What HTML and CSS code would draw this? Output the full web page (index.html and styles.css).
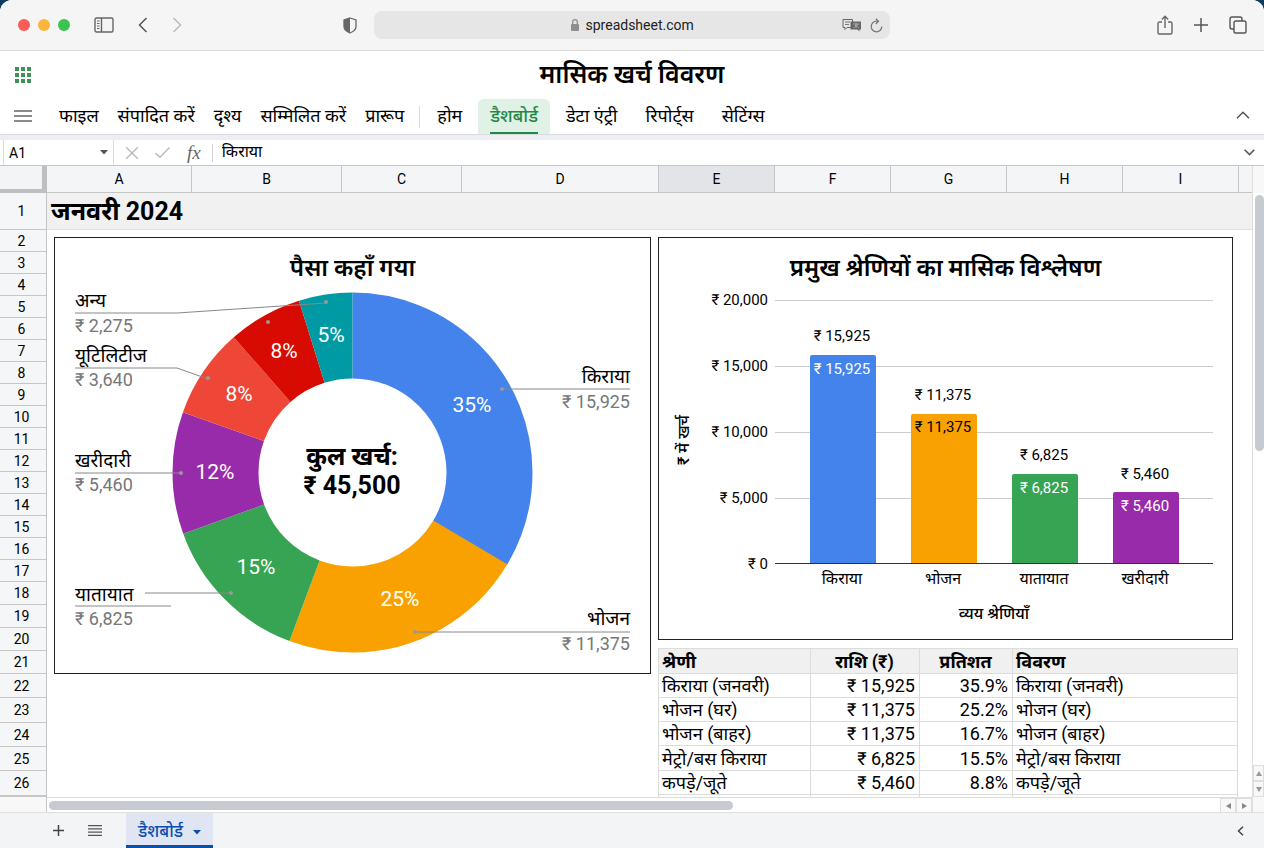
FILE: index.html
```html
<!DOCTYPE html>
<html lang="hi">
<head>
  <meta charset="UTF-8">
  <meta name="viewport" content="width=device-width, initial-scale=1.0">
  <title>मासिक खर्च विवरण</title>
  <link rel="stylesheet" href="styles.css">
</head>
<body>
  <div class="window">
    <header class="browser-bar">
      <div class="bar-left">
        <span class="light red"></span>
        <span class="light yellow"></span>
        <span class="light green"></span>
        <button class="icon-btn sidebar-btn" aria-label="Sidebar">
          <svg width="20" height="16" viewBox="0 0 20 16" fill="none" stroke="#666" stroke-width="1.4"><rect x="1" y="1" width="18" height="14" rx="1.5"/><path d="M7.5 1v14"/><path d="M3 4h2.500M3 6.500h2.500M3 9h2.500M3 11.500h2.500" stroke-width="1"/></svg>
        </button>
        <button class="icon-btn back-btn" aria-label="Back">
          <svg width="10" height="16" viewBox="0 0 10 16" fill="none" stroke="#555" stroke-width="1.5"><path d="M8.500 1L1.500 8l7 7"/></svg>
        </button>
        <button class="icon-btn" aria-label="Forward">
          <svg width="10" height="16" viewBox="0 0 10 16" fill="none" stroke="#bbb" stroke-width="1.5"><path d="M1.500 1l7 7-7 7"/></svg>
        </button>
        <button class="icon-btn shield-btn" aria-label="Privacy">
          <svg width="14" height="17" viewBox="0 0 14 17"><path d="M7 1l6 2v6.500c0 3-2.500 5-6 6.500-3.500-1.500-6-3.500-6-6.500V3z" fill="#f5f5f5" stroke="#666" stroke-width="1.3"/><path d="M7 1v15c-3.500-1.500-6-3.500-6-6.500V3z" fill="#666"/></svg>
        </button>
      </div>
      <div class="address">
        <div class="address-main">
          <svg width="10" height="14" viewBox="0 0 10 14"><rect x="1" y="6" width="8" height="7" rx="1" fill="#8e8e8e"/><path d="M2.700 6V4a2.300 2.300 0 0 1 4.600 0v2" fill="none" stroke="#8e8e8e" stroke-width="1.300"/></svg>
          <input type="text" class="url" value="spreadsheet.com" aria-label="Address">
        </div>
        <div class="address-tools">
          <button class="icon-btn" aria-label="Translate">
            <svg width="20" height="14" viewBox="0 0 20 14"><path d="M1 1.500h9.500v8H5L3 11.500v-2H1z" fill="#e6e6e6" stroke="#666" stroke-width="1"/><path d="M3 4h5M3 6.500h4" stroke="#777" stroke-width="1"/><path d="M8.500 3.500H19v8h-1.500v2l-2-2h-7z" fill="#666"/><path d="M11 6h6.500M14 4.500v5.500M11.500 10l5-4M17 10l-4-3" stroke="#bbb" stroke-width=".7"/></svg>
          </button>
          <button class="icon-btn" aria-label="Reload">
            <svg width="13" height="15" viewBox="0 0 13 15" fill="none" stroke="#777" stroke-width="1.200"><path d="M11.800 8.500a5.300 5.300 0 1 1-5.300-5.300h1.500M5.800.6l2.700 2.600-2.700 2.800"/></svg>
          </button>
        </div>
      </div>
      <div class="bar-right">
        <button class="icon-btn" aria-label="Share">
          <svg width="16" height="20" viewBox="0 0 16 20" fill="none" stroke="#666" stroke-width="1.400"><path d="M5 7H2.500C1.700 7 1 7.700 1 8.500v9c0 .8.700 1.500 1.500 1.500h11c.8 0 1.500-.7 1.500-1.500v-9c0-.8-.7-1.500-1.500-1.500H11M8 13V1.500M4.800 4.500L8 1.300l3.200 3.200"/></svg>
        </button>
        <button class="icon-btn" aria-label="New tab">
          <svg width="14" height="14" viewBox="0 0 14 14" stroke="#555" stroke-width="1.500"><path d="M7 0v14M0 7h14"/></svg>
        </button>
        <button class="icon-btn" aria-label="Tabs">
          <svg width="18" height="18" viewBox="0 0 18 18" fill="none" stroke="#555" stroke-width="1.400"><rect x="5" y="5" width="12" height="12" rx="1.800"/><path d="M5 13H3c-1.100 0-2-.9-2-2V3c0-1.100.9-2 2-2h8c1.100 0 2 .9 2 2v2"/></svg>
        </button>
      </div>
    </header>

    <div class="title-row">
      <button class="icon-btn" aria-label="Apps">
        <svg width="16" height="16" viewBox="0 0 16 16" fill="#3d9257"><path d="M0 0h4v4H0zM6 0h4v4H6zM12 0h4v4h-4zM0 6h4v4H0zM6 6h4v4H6zM12 6h4v4h-4zM0 12h4v4H0zM6 12h4v4H6zM12 12h4v4h-4z"/></svg>
      </button>
      <h1>मासिक खर्च विवरण</h1>
    </div>

    <nav class="menu">
      <button class="icon-btn burger" aria-label="Menu">
        <svg width="18" height="12" viewBox="0 0 18 12" stroke="#666" stroke-width="1.500"><path d="M0 1h18M0 6h18M0 11h18"/></svg>
      </button>
      <div class="menu-items">
        <button>फाइल</button>
        <button>संपादित करें</button>
        <button>दृश्य</button>
        <button>सम्मिलित करें</button>
        <button>प्रारूप</button>
      </div>
      <div class="tabs">
        <a href="#">होम</a>
        <a href="#" class="active">डैशबोर्ड</a>
        <a href="#">डेटा एंट्री</a>
        <a href="#">रिपोर्ट्स</a>
        <a href="#">सेटिंग्स</a>
      </div>
      <button class="icon-btn collapse" aria-label="Collapse">
        <svg width="14" height="8" viewBox="0 0 14 8" fill="none" stroke="#555" stroke-width="1.500"><path d="M1 7.300l6-6 6 6"/></svg>
      </button>
    </nav>

    <div class="formula-bar">
      <div class="name-box">
        <input type="text" value="A1" aria-label="Cell">
        <button class="icon-btn" aria-label="Named ranges">
          <svg width="8" height="5" viewBox="0 0 8 5"><path d="M0 0h8L4 4.500z" fill="#555"/></svg>
        </button>
      </div>
      <div class="formula-tools">
        <button class="icon-btn" aria-label="Cancel">
          <svg width="12" height="12" viewBox="0 0 12 12" stroke="#b8b8b8" stroke-width="1.300"><path d="M0 0l12 12M12 0L0 12"/></svg>
        </button>
        <button class="icon-btn" aria-label="Accept">
          <svg width="15" height="11" viewBox="0 0 15 11" fill="none" stroke="#b8b8b8" stroke-width="1.300"><path d="M.5 6l4.500 4.300L14.500.5"/></svg>
        </button>
        <button class="icon-btn fx" aria-label="Function">fx</button>
      </div>
      <input type="text" class="formula" value="किराया" aria-label="Formula">
      <button class="icon-btn" aria-label="Expand">
        <svg width="11" height="7" viewBox="0 0 11 7" fill="none" stroke="#555" stroke-width="1.500"><path d="M.7.8l4.800 4.800L10.300.8"/></svg>
      </button>
    </div>

    <main class="sheet">
      <div class="corner"></div>
      <div class="col-heads">
        <span>A</span><span>B</span><span>C</span><span>D</span><span class="selected">E</span><span>F</span><span>G</span><span>H</span><span>I</span><span></span>
      </div>
      <div class="head-end"></div>

      <div class="row-heads">
        <span>1</span><span>2</span><span>3</span><span>4</span><span>5</span><span>6</span><span>7</span><span>8</span><span>9</span><span>10</span><span>11</span><span>12</span><span>13</span><span>14</span><span>15</span><span>16</span><span>17</span><span>18</span><span>19</span><span>20</span><span>21</span><span>22</span><span>23</span><span>24</span><span>25</span><span>26</span><span></span>
      </div>

      <div class="cells">
        <h2 class="month">जनवरी 2024</h2>
        <div class="dashboard">
          <section class="panel">
            <h3>पैसा कहाँ गया</h3>
            <svg class="donut" viewBox="0 0 595 383">
              <g class="slices" transform="rotate(-90 297.500 182.500)">
                <circle cx="297.500" cy="182.500" r="137" pathLength="360" stroke="#4483ec" stroke-dasharray="121 239"/>
                <circle cx="297.500" cy="182.500" r="137" pathLength="360" stroke="#f8a100" stroke-dasharray="79.800 280.200" stroke-dashoffset="-120.700"/>
                <circle cx="297.500" cy="182.500" r="137" pathLength="360" stroke="#36a452" stroke-dasharray="49.600 310.400" stroke-dashoffset="-200.500"/>
                <circle cx="297.500" cy="182.500" r="137" pathLength="360" stroke="#982ba9" stroke-dasharray="39.500 320.500" stroke-dashoffset="-250.100"/>
                <circle cx="297.500" cy="182.500" r="137" pathLength="360" stroke="#ee4737" stroke-dasharray="29.100 330.900" stroke-dashoffset="-289.600"/>
                <circle cx="297.500" cy="182.500" r="137" pathLength="360" stroke="#d80b02" stroke-dasharray="24 336" stroke-dashoffset="-318.700"/>
                <circle cx="297.500" cy="182.500" r="137" pathLength="360" stroke="#009aa4" stroke-dasharray="17.300 342.700" stroke-dashoffset="-342.700"/>
              </g>
              <g class="leaders">
                <path d="M20 23h102l149-10"/><circle cx="271" cy="12" r="2"/>
                <circle cx="213" cy="32" r="2"/>
                <path d="M20 78h102l31 11"/><circle cx="153" cy="88" r="2"/>
                <path d="M20 183h105"/><circle cx="126" cy="183" r="2"/>
                <path d="M90 303h85M20 316h96"/><circle cx="176" cy="303" r="2"/>
                <path d="M447 99h128"/><circle cx="447" cy="99" r="2"/>
                <path d="M360 342h215"/><circle cx="360" cy="342" r="2"/>
              </g>
              <g class="percent">
                <text x="417" y="122">35%</text>
                <text x="345" y="316">25%</text>
                <text x="201" y="284">15%</text>
                <text x="160" y="189">12%</text>
                <text x="184" y="111">8%</text>
                <text x="229" y="68">8%</text>
                <text x="276" y="52">5%</text>
              </g>
              <g class="total">
                <text x="297" y="175">कुल खर्च:</text>
                <text x="297" y="204">₹ 45,500</text>
              </g>
              <g class="name">
                <text x="20" y="17">अन्य</text>
                <text x="20" y="72">यूटिलिटीज</text>
                <text x="20" y="177">खरीदारी</text>
                <text x="20" y="311">यातायात</text>
                <text class="end" x="575" y="93">किराया</text>
                <text class="end" x="575" y="335">भोजन</text>
              </g>
              <g class="amount">
                <text x="20" y="42">₹ 2,275</text>
                <text x="20" y="96">₹ 3,640</text>
                <text x="20" y="201">₹ 5,460</text>
                <text x="20" y="335">₹ 6,825</text>
                <text class="end" x="575" y="118">₹ 15,925</text>
                <text class="end" x="575" y="360">₹ 11,375</text>
              </g>
            </svg>
          </section>

          <div class="right-side">
            <section class="panel">
              <h3>प्रमुख श्रेणियों का मासिक विश्लेषण</h3>
              <svg class="bars" viewBox="0 0 573 349">
                <path class="grid" d="M116 10.500h438M116 76.500h438M116 142.500h438M116 208.500h438"/>
                <path fill="#4483ec" d="M151 274V67q0-2 2-2h62q2 0 2 2v207z"/>
                <path fill="#f8a100" d="M252 274V126q0-2 2-2h62q2 0 2 2v148z"/>
                <path fill="#36a452" d="M353 274V186q0-2 2-2h62q2 0 2 2v88z"/>
                <path fill="#982ba9" d="M454 274V204q0-2 2-2h62q2 0 2 2v70z"/>
                <path class="axis" d="M116 273.500h438"/>
                <g class="scale">
                  <text x="109" y="15">₹ 20,000</text>
                  <text x="109" y="81">₹ 15,000</text>
                  <text x="109" y="147">₹ 10,000</text>
                  <text x="109" y="213">₹ 5,000</text>
                  <text x="109" y="279">₹ 0</text>
                </g>
                <g class="value">
                  <text x="183" y="51">₹ 15,925</text>
                  <text x="284" y="110">₹ 11,375</text>
                  <text x="385" y="170">₹ 6,825</text>
                  <text x="486" y="189">₹ 5,460</text>
                  <text x="183" y="84" class="light-text">₹ 15,925</text>
                  <text x="284" y="142">₹ 11,375</text>
                  <text x="385" y="203" class="light-text">₹ 6,825</text>
                  <text x="486" y="221" class="light-text">₹ 5,460</text>
                </g>
                <g class="value category">
                  <text x="183" y="294">किराया</text>
                  <text x="284" y="294">भोजन</text>
                  <text x="385" y="294">यातायात</text>
                  <text x="486" y="294">खरीदारी</text>
                </g>
                <text class="axis-title" x="335" y="329">व्यय श्रेणियाँ</text>
                <text class="axis-title" transform="translate(30 150) rotate(-90)">₹ में खर्च</text>
              </svg>
            </section>

            <table>
              <thead>
                <tr><th class="cat">श्रेणी</th><th class="amt">राशि (₹)</th><th class="pct">प्रतिशत</th><th>विवरण</th></tr>
              </thead>
              <tbody>
                <tr><td>किराया (जनवरी)</td><td class="num">₹ 15,925</td><td class="num">35.9%</td><td>किराया (जनवरी)</td></tr>
                <tr><td>भोजन (घर)</td><td class="num">₹ 11,375</td><td class="num">25.2%</td><td>भोजन (घर)</td></tr>
                <tr><td>भोजन (बाहर)</td><td class="num">₹ 11,375</td><td class="num">16.7%</td><td>भोजन (बाहर)</td></tr>
                <tr><td>मेट्रो/बस किराया</td><td class="num">₹ 6,825</td><td class="num">15.5%</td><td>मेट्रो/बस किराया</td></tr>
                <tr><td>कपड़े/जूते</td><td class="num">₹ 5,460</td><td class="num">8.8%</td><td>कपड़े/जूते</td></tr>
                <tr><td></td><td></td><td></td><td></td></tr>
              </tbody>
            </table>
          </div>
        </div>
      </div>

      <div class="scroll-y">
        <div class="thumb-y"></div>
        <button class="arrow" aria-label="Scroll up"><svg width="6" height="5" viewBox="0 0 6 5"><path d="M0 5h6L3 0z" fill="#999"/></svg></button>
        <button class="arrow" aria-label="Scroll down"><svg width="6" height="5" viewBox="0 0 6 5"><path d="M0 0h6L3 5z" fill="#999"/></svg></button>
      </div>

      <div class="foot-corner"></div>
      <div class="scroll-x">
        <div class="track-x"><div class="thumb-x"></div></div>
        <button class="arrow" aria-label="Scroll left"><svg width="5" height="6" viewBox="0 0 5 6"><path d="M5 0v6L0 3z" fill="#888"/></svg></button>
        <button class="arrow" aria-label="Scroll right"><svg width="5" height="6" viewBox="0 0 5 6"><path d="M0 0v6l5-3z" fill="#888"/></svg></button>
      </div>
      <div class="foot-end"></div>
    </main>

    <footer class="sheet-tabs">
      <button class="icon-btn" aria-label="Add sheet">
        <svg width="11" height="11" viewBox="0 0 11 11" stroke="#444" stroke-width="1.500"><path d="M5.500 0v11M0 5.500h11"/></svg>
      </button>
      <button class="icon-btn" aria-label="All sheets">
        <svg width="14" height="11" viewBox="0 0 14 11" stroke="#555" stroke-width="1.300"><path d="M0 .7h14M0 3.900h14M0 7.100h14M0 10.300h14"/></svg>
      </button>
      <button class="sheet-tab">
        <span>डैशबोर्ड</span>
        <svg width="8" height="5" viewBox="0 0 8 5"><path d="M0 0h8L4 4.500z" fill="#0b4fae"/></svg>
      </button>
      <button class="icon-btn explore" aria-label="Side panel">
        <svg width="7" height="10" viewBox="0 0 7 10" fill="none" stroke="#444" stroke-width="1.500"><path d="M6 .7L1.500 5 6 9.300"/></svg>
      </button>
    </footer>
  </div>
</body>
</html>
```
FILE: styles.css
```css
* {
  box-sizing: border-box;
}

body {
  margin: 0;
  background-color: #0c3a5c;
  font-family: Roboto, "Noto Sans Devanagari", "Noto Sans", sans-serif;
  color: #000;
}

button,
input {
  font-family: inherit;
  border: none;
  background: none;
  padding: 0;
  margin: 0;
  color: inherit;
}

button {
  cursor: pointer;
}

.icon-btn {
  display: flex;
  align-items: center;
  justify-content: center;
  flex-shrink: 0;
}

.window {
  display: flex;
  flex-direction: column;
  height: 100vh;
  overflow: hidden;
  background-color: #fff;
  border-radius: 12px 12px 0 0;
}

/* browser bar */
.browser-bar {
  display: grid;
  grid-template-columns: 374fr 516fr 374fr;
  align-items: center;
  flex-shrink: 0;
  height: 51px;
  background-color: #f5f5f5;
  border-bottom: 1px solid #dcdcdc;
}

.bar-left {
  display: flex;
  align-items: center;
  gap: 8px;
  padding: 0 17px 0 18px;
}

.light {
  width: 12px;
  height: 12px;
  border-radius: 50%;
}

.red {
  background-color: #fb5b56;
}

.yellow {
  background-color: #fbb53d;
}

.green {
  background-color: #3dc254;
}

.sidebar-btn {
  margin-left: 16px;
}

.back-btn {
  margin: 0 16px;
}

.shield-btn {
  margin-left: auto;
}

.address {
  display: grid;
  grid-template-columns: 1fr auto 1fr;
  align-items: center;
  height: 28px;
  padding-right: 7px;
  background-color: #e6e6e6;
  border-radius: 8px;
}

.address-main {
  grid-column: 2;
  display: flex;
  align-items: center;
  gap: 6px;
  margin-left: 8px;
}

.url {
  width: 110px;
  font-size: 14px;
  color: #222;
}

.address-tools {
  display: flex;
  align-items: center;
  justify-content: flex-end;
  gap: 8px;
}

.bar-right {
  display: flex;
  align-items: center;
  justify-content: flex-end;
  gap: 21px;
  padding-right: 17px;
}

/* title and menu */
.title-row {
  display: grid;
  grid-template-columns: 32px 1fr 32px;
  align-items: center;
  flex-shrink: 0;
  height: 48px;
  padding: 0 7px;
}

h1 {
  margin: 0;
  font-size: 25px;
  font-weight: 600;
  line-height: 48px;
  text-align: center;
}

.menu {
  display: flex;
  align-items: center;
  flex-shrink: 0;
  height: 36px;
  padding: 0 14px;
  border-bottom: 1px solid #dadce0;
  font-size: 18px;
}

.burger {
  padding-bottom: 2px;
}

.menu-items {
  display: flex;
  gap: 19px;
  margin-left: 27px;
  padding-right: 15px;
  border-right: 1px solid #dadada;
}

.menu-items button {
  font-size: 18px;
  line-height: 20px;
  padding-bottom: 2px;
}

.tabs {
  display: flex;
  gap: 4px;
  margin-left: 5px;
  height: 35px;
}

.tabs a {
  padding: 0 12px;
  line-height: 33px;
  color: #000;
  text-decoration: none;
}

.tabs .active {
  display: flex;
  flex-direction: column;
  color: #1f8a48;
  background-color: #e0f1e5;
  border-radius: 6px 6px 0 0;
  font-weight: 500;
}

.tabs .active::after {
  content: "";
  height: 2px;
  background-color: #1f8a48;
}

.collapse {
  margin-left: auto;
  padding-bottom: 3px;
}

/* formula bar */
.formula-bar {
  display: flex;
  align-items: center;
  flex-shrink: 0;
  height: 31px;
  padding: 0 9px 0 3px;
  border-top: 5px solid #eceef1;
  border-bottom: 1px solid #c6c6c6;
  font-size: 14px;
}

.name-box {
  display: flex;
  align-items: center;
  width: 111px;
  height: 25px;
  padding: 0 5px;
  border: 1px solid #dadce0;
  border-width: 0 1px;
}

.name-box input {
  flex: 1;
  min-width: 0;
  font-size: 14px;
}

.formula-tools {
  display: flex;
  align-items: center;
  gap: 17px;
  padding: 0 11px 0 12px;
  border-right: 1px solid #d5d5d5;
}

.fx {
  font-family: "Liberation Serif", serif;
  font-style: italic;
  font-size: 19px;
  line-height: 18px;
  color: #666;
}

.formula {
  flex: 1;
  padding-left: 9px;
  font-size: 16px;
  height: 24px;
}

/* sheet */
.sheet {
  flex: 1;
  min-height: 0;
  display: grid;
  grid-template-columns: 47px 1fr 12px;
  grid-template-rows: 27px minmax(0, 1fr) 15px;
}

.corner {
  background-color: #f3f4f6;
  border-right: 5px solid #bebfc1;
  border-bottom: 4px solid #bebfc1;
}

.col-heads {
  display: grid;
  grid-template-columns: 145fr 150fr 120fr 197fr 116fr 116fr 116fr 116fr 116fr 13fr;
  background-color: #f4f5f7;
  border-bottom: 1px solid #c6c6c6;
  font-size: 14px;
  line-height: 26px;
  text-align: center;
}

.col-heads span {
  border-right: 1px solid #c6c6c6;
}

.col-heads span:last-child {
  border-right: none;
}

.col-heads .selected {
  background-color: #e3e4e8;
}

.head-end,
.foot-end {
  background-color: #f8f8f8;
  border-left: 1px solid #dedede;
}

.row-heads {
  display: grid;
  grid-template-rows: 37px repeat(16, 22px) repeat(4, 23px) 24px 25px 24px 24px 25px;
  overflow: hidden;
  background-color: #f5f6f8;
  border-right: 1px solid #c6c6c6;
  font-size: 14px;
}

.row-heads span {
  display: flex;
  align-items: center;
  justify-content: center;
  padding-right: 3px;
  border-bottom: 1px solid #c6c6c6;
}

.cells {
  overflow: hidden;
}

.month {
  height: 37px;
  margin: 0;
  padding-left: 4px;
  background-color: #f1f1f1;
  border-bottom: 1px solid #e0e0e0;
  font-size: 25px;
  font-weight: 700;
  line-height: 37px;
}

.dashboard {
  display: grid;
  grid-template-columns: 597fr 580fr;
  align-items: start;
  gap: 7px;
  padding: 7px 14px 0 7px;
}

.panel {
  border: 1px solid #222;
}

.panel svg {
  display: block;
  width: 100%;
  height: auto;
  overflow: visible;
}

h3 {
  margin: 0;
  height: 52px;
  padding-top: 8px;
  font-size: 24px;
  font-weight: 600;
  line-height: 44px;
  text-align: center;
}

.right-side .panel {
  margin-right: 5px;
}

.slices circle {
  fill: none;
  stroke-width: 86px;
}

.leaders path {
  fill: none;
  stroke: #888;
}

.leaders circle {
  fill: #999;
}

.percent text {
  font-size: 21px;
  fill: #fff;
  text-anchor: middle;
}

.total text {
  font-size: 25px;
  font-weight: 700;
  text-anchor: middle;
}

.name text {
  font-size: 19px;
}

.amount text {
  font-size: 18px;
  fill: #777;
}

.donut .end {
  text-anchor: end;
}

.grid {
  stroke: #ccc;
}

.axis {
  stroke: #333;
}

.scale text {
  font-size: 15px;
  text-anchor: end;
}

.value text {
  font-size: 15px;
  text-anchor: middle;
}

.value .light-text {
  fill: #fff;
}

.category text {
  font-size: 16px;
}

.axis-title {
  font-size: 16px;
  font-weight: 500;
  text-anchor: middle;
}

/* table */
table {
  width: 100%;
  margin-top: 8px;
  border-collapse: collapse;
  table-layout: fixed;
  font-size: 18px;
}

th,
td {
  height: 24px;
  padding: 0 4px 0 3px;
  border: 1px solid #dcdcdc;
  line-height: 23px;
  text-align: left;
  white-space: nowrap;
}

th {
  height: 25px;
  background-color: #f0f0f0;
}

tr:nth-child(4) td {
  height: 25px;
}

.cat {
  width: 152px;
}

.amt {
  width: 109px;
  text-align: center;
}

.pct {
  width: 93px;
  text-align: center;
}

.num {
  text-align: right;
}

/* scrollbars */
.scroll-y {
  display: flex;
  flex-direction: column;
  border-left: 1px solid #dedede;
}

.thumb-y {
  width: 9px;
  height: 256px;
  margin: 2px 0 auto 2px;
  border-radius: 5px;
  background-color: #c7cad0;
}

.arrow {
  display: flex;
  align-items: center;
  justify-content: center;
  width: 16px;
  height: 16px;
  border: 1px solid #dedede;
  background-color: #f8f8f8;
}

.scroll-y .arrow {
  width: 100%;
}

.foot-corner {
  background-color: #f8f8f8;
  border-right: 1px solid #c6c6c6;
}

.scroll-x {
  display: flex;
  border-top: 1px solid #dedede;
}

.track-x {
  flex: 1;
  padding: 3px 2px;
}

.thumb-x {
  width: 58.5%;
  height: 9px;
  border-radius: 5px;
  background-color: #c7cad0;
}

/* sheet tabs */
.sheet-tabs {
  display: flex;
  align-items: center;
  gap: 24px;
  flex-shrink: 0;
  height: 36px;
  padding: 0 20px 0 53px;
  background-color: #f3f4f6;
  border-top: 1px solid #dedede;
}

.sheet-tab {
  display: flex;
  align-items: center;
  gap: 10px;
  height: 35px;
  padding: 6px 12px 0;
  border-bottom: 3px solid #0b4fae;
  background-color: #dfe5f3;
  color: #0b4fae;
  font-size: 17px;
  font-weight: 500;
}

.explore {
  margin-left: auto;
}
```
